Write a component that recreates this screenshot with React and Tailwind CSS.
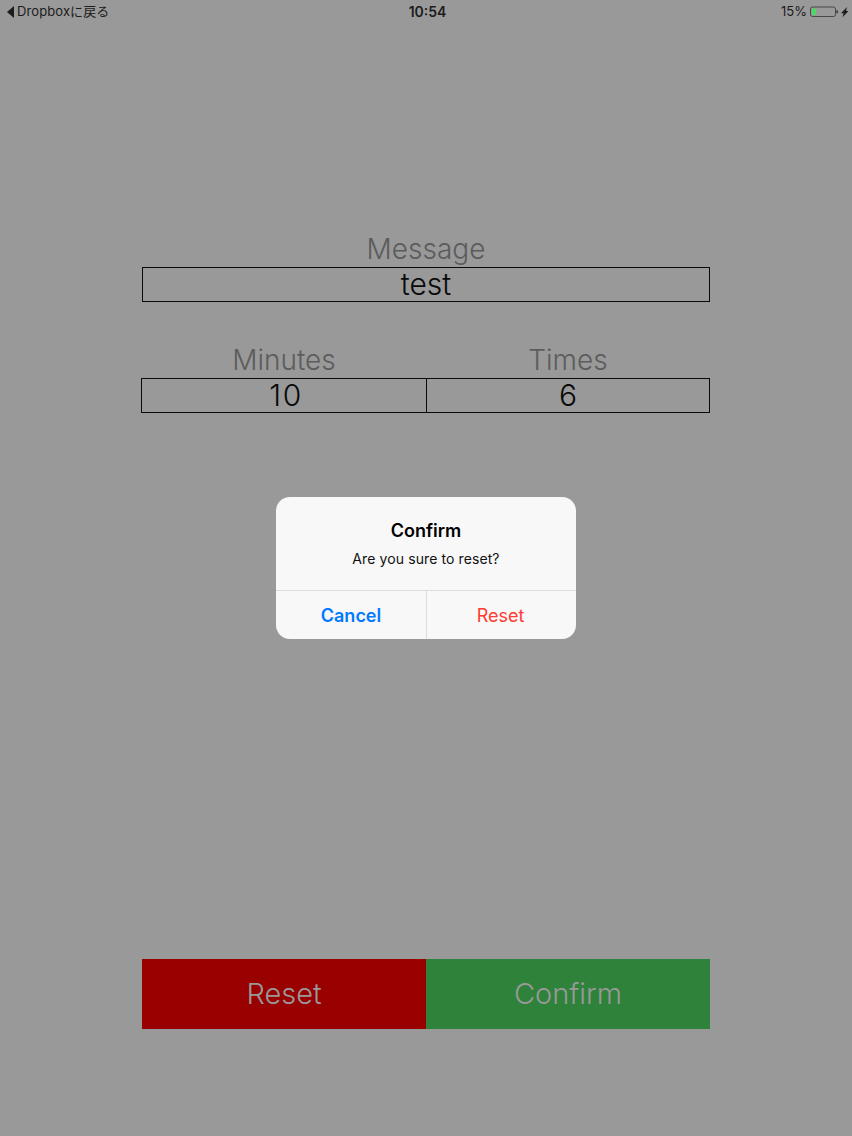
import React from 'react';

const Field = ({ label, value, valueClass = '', className = '' }) => (
    <div className={`flex flex-col ${className}`}>
        <p className="h-[37px] text-center text-[28px] leading-[38px] font-light text-[#5c5c5c]">{label}</p>
        <div className={`h-[35px] border border-[#0a0a0a] text-center text-[30px] leading-[32px] font-light text-[#0a0a0a] ${valueClass}`}>{value}</div>
    </div>
);

const App = () => {
    return (
        <div className="relative flex h-[1136px] w-[852px] flex-col overflow-hidden bg-[#999999] font-['Inter','Liberation_Sans',sans-serif]">
            {/* status bar */}
            <div className="flex h-[23px] items-center justify-between pr-[4px] pl-[7px] text-[13px] text-[#1c1c1c]">
                <div className="flex w-[200px] items-center gap-[3px]">
                    <svg width="7" height="12" viewBox="0 0 7 12"><path d="M7 0v12L0 6z" fill="#1c1c1c" /></svg>
                    <span className="text-[13px] tracking-[0.1px] font-['Inter','Noto_Sans_CJK_JP',sans-serif]">Dropboxに戻る</span>
                </div>
                <span className="text-[14px] font-semibold">10:54</span>
                <div className="flex w-[200px] items-center justify-end gap-[3px]">
                    <span>15%</span>
                    <svg width="38" height="12" viewBox="0 0 38 12">
                        <rect x="0.5" y="1" width="25" height="9.5" rx="2" fill="none" stroke="#333333" strokeWidth="0.8" />
                        <rect x="2" y="2.5" width="4" height="6.5" fill="#4cd964" />
                        <path d="M26.5 4.2h1.2v3h-1.2z" fill="#1c1c1c" />
                        <path d="M37 1l-6 6.2h2.6l-1 4 6-6.2h-2.6z" fill="#1c1c1c" />
                    </svg>
                </div>
            </div>

            <div className="mx-auto flex w-[568px] flex-1 flex-col">
                <Field label="Message" value="test" className="mt-[207px]" />
                <div className="mt-[39px] flex">
                    <Field label="Minutes" value="10" valueClass="pl-[4px] tracking-[1.5px]" className="ml-[-1px] w-[286px]" />
                    <Field label="Times" value="6" className="ml-[-1px] flex-1" />
                </div>
                <div className="mt-[546px] flex h-[70px]">
                    <div className="flex w-[284px] items-center justify-center bg-[#990000] text-[29px] font-light text-[#999999]">Reset</div>
                    <div className="flex flex-1 items-center justify-center bg-[#2e823a] text-[29px] font-light text-[#999999]">Confirm</div>
                </div>
            </div>

            {/* alert */}
            <div className="absolute top-[497px] left-[276px] w-[300px] overflow-hidden rounded-[14px] bg-[#f8f8f8]">
                <div className="flex h-[94px] flex-col items-center border-b border-[#dddddd] pt-[22px]">
                    <p className="text-[18px] leading-[24px] font-semibold text-black">Confirm</p>
                    <p className="mt-[6px] text-[14px] leading-[20px] tracking-[0.1px] text-[#111111]">Are you sure to reset?</p>
                </div>
                <div className="flex h-[48px] text-[18px]">
                    <div className="flex w-[151px] items-center justify-center border-r border-[#dddddd] font-semibold text-[#007aff]">Cancel</div>
                    <div className="flex flex-1 items-center justify-center pr-[2px] text-[#ff3b30]">Reset</div>
                </div>
            </div>
        </div>
    );
};

export default App;
